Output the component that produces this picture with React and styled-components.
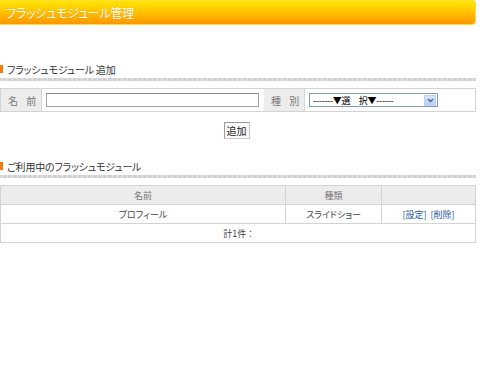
import React from "react";
import styled, { createGlobalStyle } from "styled-components";

const Global = createGlobalStyle`
  html, body { margin: 0; padding: 0; background: #fff; }
  body {
    font-family: "Noto Sans CJK JP", "Noto Sans", sans-serif;
    font-feature-settings: "palt";
    color: #333;
  }
`;

const Page = styled.div`
  width: 476px;
`;

const TitleBar = styled.div`
  height: 23px;
  display: flex;
  align-items: center;
  padding-left: 6px;
  background: linear-gradient(#ffe600 0%, #ffc400 45%, #ff9600 100%);
  border: 1px solid #ffdc40;
  border-left: none;
  border-radius: 0 4px 4px 0;
  color: #fff;
  font-size: 12px;
  letter-spacing: -0.2px;
  text-shadow: 0 0 1px rgba(200, 110, 0, 0.5);
`;

const Section = styled.div`
  margin-top: ${(p) => p.$top}px;
`;

const SectionHead = styled.div`
  display: flex;
  align-items: center;
  gap: 4px;
  height: 12px;
  font-size: 10px;
  color: #333;
  letter-spacing: -0.2px;
`;

const Mark = styled.span`
  width: 3px;
  height: 8px;
  background: #f07c10;
`;

const Rule = styled.div`
  margin-top: 3px;
  height: 3px;
  background: repeating-linear-gradient(90deg, #d4d4d4 0 2px, #e6e6e6 2px 3px, #cfcfcf 3px 5px);
`;

const FormTable = styled.table`
  margin-top: 7px;
  width: 476px;
  border-collapse: collapse;
  border: 1px solid #d3d3d3;
  font-size: 10px;
`;

const LabelCell = styled.td`
  width: ${(p) => p.$w}px;
  height: 22px;
  padding: 0 0 0 7px;
  background: #ececec;
  color: #777;
  letter-spacing: 3px;
  border-right: 1px solid #d8d8d8;
`;

const FieldCell = styled.td`
  padding: 0 0 0 4px;
  width: ${(p) => p.$w}px;
`;

const TextBox = styled.div`
  width: 211px;
  height: 12px;
  border: 1px solid #a3a3a3;
  border-top-color: #8c8c8c;
  background: #fff;
`;

const SelectBox = styled.div`
  width: 124px;
  height: 12px;
  border: 1px solid #7f9db9;
  background: #fff;
  display: flex;
  align-items: center;
  justify-content: space-between;
  font-size: 9px;
  color: #000;
  padding-left: 3px;
  box-sizing: content-box;
`;

const SelText = styled.span`
  letter-spacing: -0.3px;
  white-space: pre;
`;

const SelBtn = styled.span`
  width: 12px;
  height: 11px;
  margin-right: 1px;
  background: linear-gradient(#d7e4fb, #b7cdf5);
  border: 1px solid #bcd0f2;
  box-sizing: border-box;
  display: flex;
  align-items: center;
  justify-content: center;
`;

const ButtonRow = styled.div`
  display: flex;
  justify-content: center;
  margin-top: 10px;
`;

const Button = styled.button`
  width: 26px;
  height: 17px;
  padding: 0;
  margin-left: -3px;
  font-family: inherit;
  font-size: 10px;
  line-height: 1;
  color: #222;
  background: #fafafa;
  border: 1px solid #9a9a9a;
  border-right-color: #c8c8c8;
  border-bottom-color: #c8c8c8;
`;

const ListTable = styled.table`
  margin-top: 7px;
  width: 476px;
  border-collapse: collapse;
  border: 1px solid #d3d3d3;
  font-size: 9px;
`;

const Th = styled.th`
  height: 18px;
  padding: 0;
  background: #ececec;
  color: #777;
  font-weight: normal;
  text-align: center;
  border: 1px solid #d3d3d3;
  width: ${(p) => p.$w}px;
`;

const Td = styled.td`
  height: 18px;
  padding: 0;
  text-align: center;
  border: 1px solid #d3d3d3;
  color: #444;
`;

const Link = styled.a`
  color: #2a5a9e;
  text-decoration: none;
  margin: 0 2px;
`;

export default function App() {
  return (
    <Page>
      <Global />
      <TitleBar>フラッシュモジュール管理</TitleBar>

      <Section $top={38}>
        <SectionHead>
          <Mark />
          フラッシュモジュール 追加
        </SectionHead>
        <Rule />
        <FormTable>
          <tbody>
            <tr>
              <LabelCell $w={33}>名 前</LabelCell>
              <FieldCell $w={218}>
                <TextBox />
              </FieldCell>
              <LabelCell $w={33}>種 別</LabelCell>
              <FieldCell>
                <SelectBox>
                  <SelText>-------▼選　択▼------</SelText>
                  <SelBtn>
                    <svg width="7" height="5" viewBox="0 0 7 5">
                      <path d="M1 1 L3.5 3.5 L6 1" stroke="#4d6185" strokeWidth="1.4" fill="none" />
                    </svg>
                  </SelBtn>
                </SelectBox>
              </FieldCell>
            </tr>
          </tbody>
        </FormTable>
        <ButtonRow>
          <Button>追加</Button>
        </ButtonRow>
      </Section>

      <Section $top={21}>
        <SectionHead>
          <Mark />
          ご利用中のフラッシュモジュール
        </SectionHead>
        <Rule />
        <ListTable>
          <thead>
            <tr>
              <Th $w={284}>名前</Th>
              <Th $w={95}>種類</Th>
              <Th></Th>
            </tr>
          </thead>
          <tbody>
            <tr>
              <Td>プロフィール</Td>
              <Td>スライドショー</Td>
              <Td>
                <Link href="#">[設定]</Link>
                <Link href="#">[削除]</Link>
              </Td>
            </tr>
            <tr>
              <Td colSpan={3}>計1件 ：</Td>
            </tr>
          </tbody>
        </ListTable>
      </Section>
    </Page>
  );
}
